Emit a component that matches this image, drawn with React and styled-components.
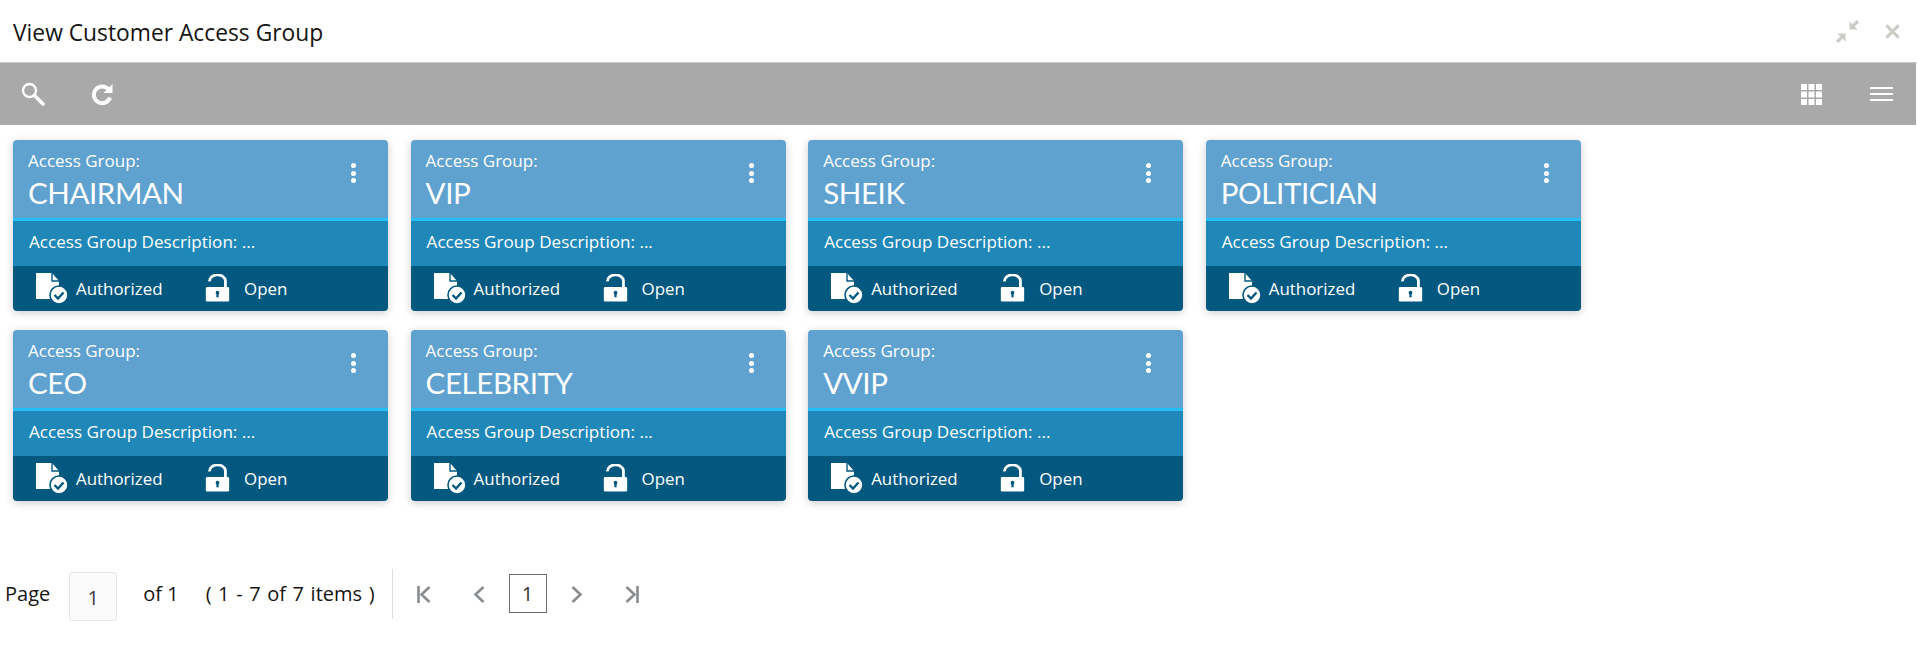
import React from 'react';
import styled, { createGlobalStyle } from 'styled-components';

const GlobalStyle = createGlobalStyle`
  html, body {
    margin: 0;
    padding: 0;
    background: #fff;
    font-family: "Open Sans", "Noto Sans", sans-serif;
  }
`;

const Page = styled.div`
  width: 1917px;
  height: 663px;
  overflow: hidden;
  display: flex;
  flex-direction: column;
`;

const TitleBar = styled.header`
  height: 63px;
  box-sizing: border-box;
  display: flex;
  align-items: center;
  justify-content: space-between;
  padding: 0 17px 0 13px;
  border-bottom: 1px solid #c8ccce;
`;

const Title = styled.h1`
  margin: 2px 0 0;
  font-size: 22.8px;
  font-weight: 400;
  color: #161513;
`;

const WindowActions = styled.div`
  display: flex;
  align-items: center;
  gap: 25px;
`;

const Toolbar = styled.div`
  height: 62px;
  margin-right: 1px;
  background: #a9a9a9;
  display: flex;
  align-items: center;
  justify-content: space-between;
  padding: 0 23px 0 21px;
`;

const ToolGroup = styled.div`
  display: flex;
  align-items: center;
  gap: ${(p) => p.$gap}px;
`;

const CardGrid = styled.div`
  display: grid;
  grid-template-columns: repeat(4, 375px);
  grid-auto-rows: 170.5px;
  column-gap: 22.6px;
  row-gap: 19.5px;
  padding: 15px 0 0 13px;
`;

const Card = styled.article`
  border-radius: 4px;
  overflow: hidden;
  display: flex;
  flex-direction: column;
  box-shadow: 0 2px 9px rgba(0, 0, 0, 0.2);
`;

const CardHead = styled.div`
  height: 81px;
  box-sizing: border-box;
  background: #5fa2d0;
  border-bottom: 3px solid #26bef6;
  display: flex;
  justify-content: space-between;
  padding: 10px 32px 0 15px;
  color: #fff;
`;

const HeadText = styled.div`
  display: flex;
  flex-direction: column;
`;

const GroupLabel = styled.span`
  font-size: 17px;
  line-height: 22px;
`;

const GroupName = styled.span`
  font-family: "Lato", "Open Sans", sans-serif;
  font-size: 29.5px;
  line-height: 40px;
  letter-spacing: -0.4px;
  margin-top: 1px;
`;

const MenuDots = styled.div`
  display: flex;
  flex-direction: column;
  gap: 2.5px;
  margin-top: 13px;
`;

const Dot = styled.i`
  display: block;
  width: 5px;
  height: 5px;
  border-radius: 50%;
  background: #fff;
`;

const CardDesc = styled.div`
  flex: 1;
  background: #1f88b8;
  color: #fff;
  font-size: 17.1px;
  display: flex;
  align-items: center;
  padding: 0 0 3px 16px;
`;

const CardFoot = styled.div`
  height: 45px;
  background: #02587f;
  color: #fff;
  font-size: 16.9px;
  display: flex;
  align-items: center;
  padding-left: 22px;
`;

const Status = styled.div`
  display: flex;
  align-items: center;
  gap: ${(p) => p.$gap}px;
  width: ${(p) => p.$width}px;
`;

const Pager = styled.nav`
  display: flex;
  align-items: center;
  height: 56px;
  margin-top: 65px;
  padding-left: 5px;
  font-size: 20px;
  color: #161513;
`;

const PageLabel = styled.span`
  margin-right: 19px;
`;

const PageInput = styled.div`
  width: 48px;
  height: 49px;
  box-sizing: border-box;
  margin: 5px 26px 0 0;
  padding-top: 2px;
  border: 1px solid #e4e6e8;
  border-radius: 3px;
  background: #fbfbfb;
  display: flex;
  align-items: center;
  justify-content: center;
  color: #3a3a3a;
`;

const OfLabel = styled.span`
  margin-right: 27px;
`;

const ItemsLabel = styled.span`
  word-spacing: 1.4px;
`;

const Divider = styled.div`
  width: 1px;
  height: 50px;
  background: #dcdfe1;
  margin: 0 24px 0 17px;
`;

const PagerIcons = styled.div`
  display: flex;
  align-items: center;
`;

const NavBtn = styled.div`
  display: flex;
  margin-left: ${(p) => p.$left}px;
  margin-top: 2px;
`;

const CurrentPage = styled.div`
  width: 38px;
  height: 39px;
  margin: 0 0 0 24px;
  box-sizing: border-box;
  border: 1px solid #6b6b6b;
  display: flex;
  align-items: center;
  justify-content: center;
  color: #333;
`;

const SearchIcon = () => (
  <svg width="24" height="24" viewBox="0 0 24 24" fill="none" stroke="#fff">
    <circle cx="8.5" cy="8.5" r="6.5" strokeWidth="2.4" />
    <path d="M13.5 13.5 L22 22" strokeWidth="3.6" strokeLinecap="round" />
  </svg>
);

const RefreshIcon = () => (
  <svg width="22" height="23" viewBox="0 0 22 23" fill="none">
    <path d="M17.6 6.6 A8.3 8.3 0 1 0 19 14.5" stroke="#fff" strokeWidth="4" />
    <path d="M12.5 10 L21.5 10 L21.5 1 Z" fill="#fff" />
  </svg>
);

const GridIcon = () => (
  <svg width="21" height="21" viewBox="0 0 21 21" fill="#fff">
    {[0, 7.5, 15].flatMap((y) =>
      [0, 7.5, 15].map((x) => <rect key={`${x}-${y}`} x={x} y={y} width="6" height="6" />)
    )}
  </svg>
);

const MenuIcon = () => (
  <svg width="23" height="14" viewBox="0 0 23 14" fill="#fff">
    <rect y="0" width="23" height="2" />
    <rect y="6" width="23" height="2" />
    <rect y="12" width="23" height="2" />
  </svg>
);

const CollapseIcon = () => (
  <svg width="25" height="25" viewBox="0 0 26 26" fill="#cdcbc5">
    <path d="M15 11 L15 2.5 L18 5.5 L22.5 1 L25 3.5 L20.5 8 L23.5 11 Z" />
    <path d="M11 15 L11 23.5 L8 20.5 L3.5 25 L1 22.5 L5.5 18 L2.5 15 Z" />
  </svg>
);

const CloseIcon = () => (
  <svg width="15" height="15" viewBox="0 0 16 16" stroke="#cdcbc5" strokeWidth="3.2">
    <path d="M1.5 1.5 L14.5 14.5 M14.5 1.5 L1.5 14.5" />
  </svg>
);

const AuthorizedIcon = () => (
  <svg width="33" height="32" viewBox="0 0 33 32">
    <path d="M1 1 H17 L24 9 V27 H1 Z" fill="#fff" />
    <path d="M17 1 V9 H24" fill="none" stroke="#02587f" strokeWidth="1.4" />
    <circle cx="24" cy="23" r="9" fill="#fff" stroke="#02587f" strokeWidth="1.6" />
    <path d="M19.5 23 L23 26.5 L28.5 20.5" fill="none" stroke="#02587f" strokeWidth="2.4" />
  </svg>
);

const UnlockIcon = () => (
  <svg width="25" height="28" viewBox="0 0 26 30">
    <path d="M4.5 8 A8.5 6.5 0 0 1 21.5 7 V15" fill="none" stroke="#fff" strokeWidth="3" />
    <rect x="0.5" y="14" width="25" height="15.5" rx="1.5" fill="#fff" />
    <circle cx="13" cy="20" r="2" fill="#02587f" />
    <rect x="11.8" y="20" width="2.4" height="5" fill="#02587f" />
  </svg>
);

const pagerChevron = '#8a8d90';

const FirstIcon = () => (
  <svg width="14" height="17" viewBox="0 0 14 17" fill="none" stroke={pagerChevron} strokeWidth="2.6">
    <path d="M1.5 0 V17 M12.5 1 L4.5 8.5 L12.5 16" />
  </svg>
);

const PrevIcon = () => (
  <svg width="12" height="17" viewBox="0 0 12 17" fill="none" stroke={pagerChevron} strokeWidth="2.6">
    <path d="M10.5 1 L2.5 8.5 L10.5 16" />
  </svg>
);

const NextIcon = () => (
  <svg width="12" height="17" viewBox="0 0 12 17" fill="none" stroke={pagerChevron} strokeWidth="2.6">
    <path d="M1.5 1 L9.5 8.5 L1.5 16" />
  </svg>
);

const LastIcon = () => (
  <svg width="14" height="17" viewBox="0 0 14 17" fill="none" stroke={pagerChevron} strokeWidth="2.6">
    <path d="M12.5 0 V17 M1.5 1 L9.5 8.5 L1.5 16" />
  </svg>
);

const groups = ['CHAIRMAN', 'VIP', 'SHEIK', 'POLITICIAN', 'CEO', 'CELEBRITY', 'VVIP'];

const App = () => (
  <Page>
    <GlobalStyle />
    <TitleBar>
      <Title>View Customer Access Group</Title>
      <WindowActions>
        <CollapseIcon />
        <CloseIcon />
      </WindowActions>
    </TitleBar>
    <Toolbar>
      <ToolGroup $gap={46}>
        <SearchIcon />
        <RefreshIcon />
      </ToolGroup>
      <ToolGroup $gap={48}>
        <GridIcon />
        <MenuIcon />
      </ToolGroup>
    </Toolbar>
    <CardGrid>
      {groups.map((name) => (
        <Card key={name}>
          <CardHead>
            <HeadText>
              <GroupLabel>Access Group:</GroupLabel>
              <GroupName>{name}</GroupName>
            </HeadText>
            <MenuDots>
              <Dot />
              <Dot />
              <Dot />
            </MenuDots>
          </CardHead>
          <CardDesc>Access Group Description: ...</CardDesc>
          <CardFoot>
            <Status $gap={8} $width={170}>
              <AuthorizedIcon />
              Authorized
            </Status>
            <Status $gap={14} $width={120}>
              <UnlockIcon />
              Open
            </Status>
          </CardFoot>
        </Card>
      ))}
    </CardGrid>
    <Pager>
      <PageLabel>Page</PageLabel>
      <PageInput>1</PageInput>
      <OfLabel>of 1</OfLabel>
      <ItemsLabel>( 1 - 7 of 7 items )</ItemsLabel>
      <Divider />
      <PagerIcons>
        <NavBtn $left={0}><FirstIcon /></NavBtn>
        <NavBtn $left={42}><PrevIcon /></NavBtn>
        <CurrentPage>1</CurrentPage>
        <NavBtn $left={24}><NextIcon /></NavBtn>
        <NavBtn $left={42}><LastIcon /></NavBtn>
      </PagerIcons>
    </Pager>
  </Page>
);

export default App;
